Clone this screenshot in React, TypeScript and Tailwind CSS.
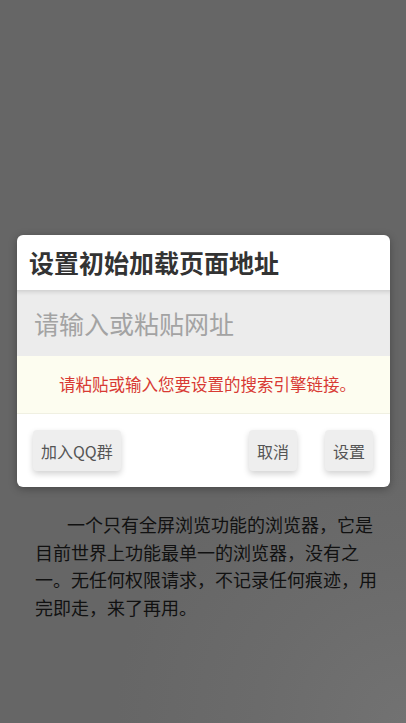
const FONT = "font-['Noto_Sans_CJK_SC','Noto_Sans',sans-serif]";

function DialogButton({ label }: { label: string }) {
  return (
    <button
      type="button"
      className="h-[41px] rounded-[4px] bg-[#eeeeee] px-[8px] text-[16px] leading-none text-[#555] shadow-[0_3px_6px_rgba(0,0,0,0.18)]"
    >
      {label}
    </button>
  );
}

export default function App() {
  return (
    <div
      className={`${FONT} flex h-[723px] w-full flex-col overflow-hidden bg-[#666666] bg-[radial-gradient(circle_at_100%_100%,#727272_0%,#6b6b6b_18%,transparent_35%)] pt-[235px]`}
    >
      {/* Dialog */}
      <div className="mx-[17px] w-[373px] overflow-hidden rounded-[6px] bg-white shadow-[0_2px_8px_rgba(0,0,0,0.3)]">
        <div className="flex h-[55px] items-center pl-[12px] text-[25px] font-bold text-[#333]">
          设置初始加载页面地址
        </div>

        <div className="flex h-[66px] items-center bg-[#ececec] pl-[17px] shadow-[inset_0_5px_4px_-3px_rgba(0,0,0,0.13)]">
          <span className="text-[25px] leading-none text-[#a3a3a3]">请输入或粘贴网址</span>
        </div>

        <div className="flex h-[58px] items-center justify-center border-b border-[#f0f0e2] bg-[#fdfdf0] pl-[8px]">
          <span className="text-[16.5px] text-[#d83a34]">请粘贴或输入您要设置的搜索引擎链接。</span>
        </div>

        <div className="flex items-center py-[16px] pl-[16px] pr-[17px]">
          <DialogButton label="加入QQ群" />
          <div className="flex-1" />
          <DialogButton label="取消" />
          <div className="w-[28px]" />
          <DialogButton label="设置" />
        </div>
      </div>

      {/* Intro text */}
      <p className="ml-[35px] mt-[24px] w-[345px] indent-[32px] text-[18px] leading-[27.5px] text-[#111]">
        一个只有全屏浏览功能的浏览器，它是目前世界上功能最单一的浏览器，没有之一。无任何权限请求，不记录任何痕迹，用完即走，来了再用。
      </p>
    </div>
  );
}
